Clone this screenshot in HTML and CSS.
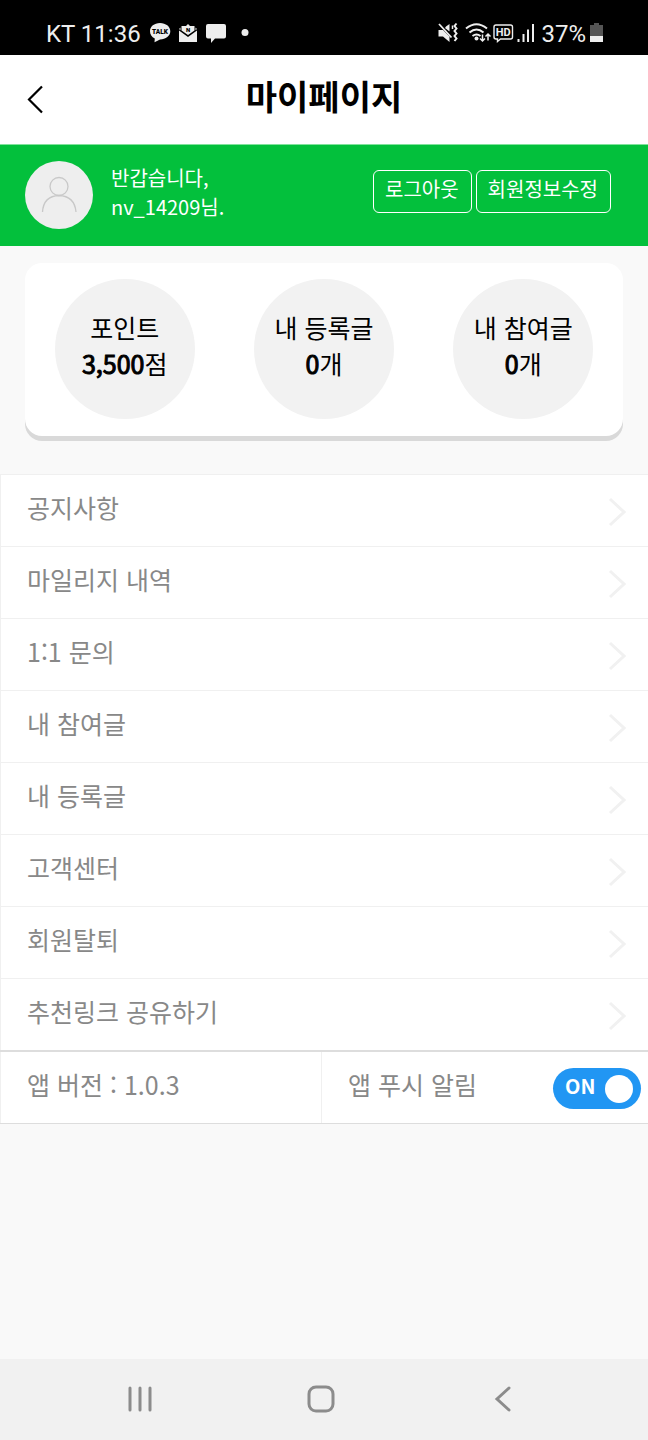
FILE: index.html
```html
<!DOCTYPE html>
<html lang="ko">
<head>
<meta charset="utf-8">
<meta name="viewport" content="width=device-width, initial-scale=1">
<title>마이페이지</title>
<link rel="stylesheet" href="styles.css">
</head>
<body>
<div class="status">
  <div class="status-side">
    <span class="status-text">KT 11:36</span>
    <svg class="status-notices" width="102" height="24" viewBox="0 0 102 24" aria-hidden="true">
      <path fill="#eee" d="M11 2c5.800 0 10.300 3.600 10.300 8.200s-4.500 8.200-10.300 8.200L5.500 21.200 5.800 17.500C2.700 15.900 1 13.300 1 10.200 1 5.600 5.200 2 11 2z"/>
      <text class="tiny" x="11" y="12.700" font-size="6.500" text-anchor="middle">TALK</text>
      <path fill="#eee" d="M30 9.500l9 6.500 9-6.500V21H30z"/>
      <path fill="#eee" d="M32.500 5H37l2-2 2 2h4.500v4.500L39 14l-6.500-4.500zM30 8l1.500-1.500v2.700zM48 8l-1.500-1.500v2.700z"/>
      <text class="tiny" x="39" y="10.500" font-size="6" text-anchor="middle">N</text>
      <path fill="#eee" d="M59 3h16q2 0 2 2v10.500q0 2-2 2h-9L62 22v-4.500h-3q-2 0-2-2V5q0-2 2-2z"/>
      <circle fill="#eee" cx="96" cy="11.500" r="3.500"/>
    </svg>
  </div>
  <div class="status-side">
    <svg class="status-signals" width="98" height="24" viewBox="0 0 98 24" aria-hidden="true">
      <path fill="#eee" d="M1.500 9H6l6.500 6.500V21L6 15.500H1.500zM9 5.500 12.500 3v7.500L8 7z"/>
      <path d="M2 3l12.500 13.500" stroke="#eee" stroke-width="1.800"/>
      <path d="M19.500 2.500l-2 2.500 2 2.500-2 2.500 2 2.500-2 2.500 2 2.500-2 2.500" fill="none" stroke="#eee" stroke-width="2"/>
      <path d="M15.500 4.500v3.500" stroke="#eee" stroke-width="1.500"/>
      <g fill="none" stroke="#eee" stroke-width="2"><path d="M29 7.500q10.500-8.500 21 0M32.500 11.500q7-6 14 0M35.500 15q4-3 8 0"/></g>
      <circle cx="39.500" cy="17.500" r="2" fill="#eee"/>
      <path d="M45.500 13.500v6M43 17.500l2.500 2.500 2.500-2.500M51 19.500v-6M48.500 15.500 51 13l2.500 2.500" fill="none" stroke="#eee" stroke-width="1.500"/>
      <path d="M59 4h14.500q2 0 2 2v10q0 2-2 2H63.500l-3 2.500V18H59q-2 0-2-2V6q0-2 2-2z" fill="none" stroke="#eee" stroke-width="1.400"/>
      <text class="hd" x="66.300" y="15" font-size="11" text-anchor="middle">HD</text>
      <path d="M81.500 18v3M86.500 13v8M91 8.500V21M96 3v18" stroke="#eee" stroke-width="2"/>
    </svg>
    <span class="status-text">37%</span>
    <svg class="battery" width="13" height="20" viewBox="0 0 13 20" aria-hidden="true">
      <path fill="#555" d="M4 0h5v2h4v12H0V2h4z"/><path fill="#eee" d="M0 13h13v6H0z"/>
    </svg>
  </div>
</div>

<header class="topbar">
  <button class="back" type="button" aria-label="뒤로">
    <svg width="20" height="30" viewBox="0 0 20 30"><path d="M16 1.500 3 14.500l13 13" fill="none" stroke="#000" stroke-width="2.200"/></svg>
  </button>
  <h1 class="title">마이페이지</h1>
</header>

<main>
  <section class="profile">
    <svg class="avatar" width="68" height="68" viewBox="0 0 68 68" role="img" aria-label="프로필">
      <circle cx="34" cy="34" r="34" fill="#eee"/>
      <g fill="none" stroke="#c8c8c8" stroke-width="1.300"><circle cx="34" cy="25.500" r="9"/><path d="M17.500 51q1-16 16.500-16.500Q49.500 35 51 51"/></g>
    </svg>
    <p class="greeting">반갑습니다,<br>nv_14209님.</p>
    <div class="actions">
      <button class="pill" type="button">로그아웃</button>
      <button class="pill" type="button">회원정보수정</button>
    </div>
  </section>

  <section class="stats">
    <div class="stat"><span>포인트</span><span><b>3,500</b>점</span></div>
    <div class="stat"><span>내 등록글</span><span><b>0</b>개</span></div>
    <div class="stat"><span>내 참여글</span><span><b>0</b>개</span></div>
  </section>

  <nav class="menu">
    <a class="row" href="#">공지사항<svg class="chev" viewBox="0 0 18 30"><path d="M2 2l14 13L2 28"/></svg></a>
    <a class="row" href="#">마일리지 내역<svg class="chev" viewBox="0 0 18 30"><path d="M2 2l14 13L2 28"/></svg></a>
    <a class="row" href="#">1:1 문의<svg class="chev" viewBox="0 0 18 30"><path d="M2 2l14 13L2 28"/></svg></a>
    <a class="row" href="#">내 참여글<svg class="chev" viewBox="0 0 18 30"><path d="M2 2l14 13L2 28"/></svg></a>
    <a class="row" href="#">내 등록글<svg class="chev" viewBox="0 0 18 30"><path d="M2 2l14 13L2 28"/></svg></a>
    <a class="row" href="#">고객센터<svg class="chev" viewBox="0 0 18 30"><path d="M2 2l14 13L2 28"/></svg></a>
    <a class="row" href="#">회원탈퇴<svg class="chev" viewBox="0 0 18 30"><path d="M2 2l14 13L2 28"/></svg></a>
    <a class="row" href="#">추천링크 공유하기<svg class="chev" viewBox="0 0 18 30"><path d="M2 2l14 13L2 28"/></svg></a>
  </nav>

  <section class="app">
    <div class="cell">앱 버전 : 1.0.3</div>
    <div class="cell push">
      <label for="push">앱 푸시 알림</label>
      <label class="switch" for="push">
        <input class="switch-input" id="push" type="checkbox" role="switch" checked>
        <span class="switch-text">ON</span>
        <span class="knob"></span>
      </label>
    </div>
  </section>
</main>

<footer class="sysnav">
  <button class="sys" type="button" aria-label="최근 앱"><svg width="28" height="28" viewBox="0 0 28 28"><path d="M4 3v22M14 3v22M24 3v22"/></svg></button>
  <button class="sys" type="button" aria-label="홈"><svg width="28" height="28" viewBox="0 0 28 28"><rect x="2" y="2" width="24" height="24" rx="7"/></svg></button>
  <button class="sys" type="button" aria-label="이전"><svg width="28" height="28" viewBox="0 0 28 28"><path d="M21 3 9 14l12 11"/></svg></button>
</footer>
</body>
</html>
```

FILE: styles.css
```css
* { box-sizing: border-box; }
body {
  margin: 0;
  min-height: 100vh;
  display: flex;
  flex-direction: column;
  background: #f9f9f9;
  color: #000;
  font-family: "Noto Sans CJK KR", sans-serif;
  font-size: 25px;
  line-height: 36px;
}
button { font: inherit; color: inherit; background: none; border: 0; padding: 0; cursor: pointer; }
svg { display: block; flex: none; }

.status {
  display: flex;
  justify-content: space-between;
  padding: 12px 45px 1px 46px;
  background: #000;
  color: #eee;
}
.status-side { display: flex; align-items: center; height: 42px; }
.status-text { padding-top: 1px; font-family: Roboto, sans-serif; font-size: 24px; }
.status-notices { margin-left: 8px; }
.status-signals { margin-right: 6px; }
.battery { margin-left: 4px; }
.tiny { font-family: Roboto, sans-serif; font-weight: 900; fill: #000; }
.hd { font-family: Roboto, sans-serif; font-weight: 700; fill: #eee; }

.topbar {
  display: grid;
  grid-template-columns: 72px 1fr 72px;
  align-items: center;
  height: 90px;
  background: #fff;
  border-bottom: 1px solid #80e29c;
}
.back { display: flex; padding: 0 26px; }
.title { margin: 0; padding-bottom: 8px; font-size: 34px; line-height: 48px; font-weight: 700; text-align: center; }

.profile {
  display: flex;
  align-items: center;
  gap: 18px;
  padding: 16px 37px 17px 25px;
  background: #03c03c;
  color: #fff;
  font-size: 20px;
  line-height: 29px;
}
.greeting { margin: 0; padding-bottom: 6px; }
.actions { display: flex; gap: 4px; margin-left: auto; padding-bottom: 8px; }
.pill { border: 1px solid #fff; border-radius: 6px; padding: 2px 12px 8px 11px; line-height: 31px; }

.stats {
  display: grid;
  grid-template-columns: repeat(3, 1fr);
  justify-items: center;
  margin: 17px 25px 38px;
  padding: 16px 0 17px;
  background: #fff;
  border-radius: 17px;
  box-shadow: 0 5px 0 #d9d9d9;
}
.stat {
  display: flex;
  flex-direction: column;
  align-items: center;
  justify-content: center;
  width: 140px;
  height: 140px;
  padding-bottom: 8px;
  border-radius: 50%;
  background: #f2f2f2;
}
.stat b { font-weight: 400; -webkit-text-stroke: 1px #000; }

.menu { border-left: 1px solid #f0f0f0; }
.row, .cell { display: flex; align-items: center; background: #fff; color: #888; text-decoration: none; }
.row {
  justify-content: space-between;
  height: 72px;
  padding: 0 22px 8px 26px;
  border-top: 1px solid #f0f0f0;
}
.chev { width: 18px; height: 30px; margin-top: 10px; fill: none; stroke: #f1f1f1; stroke-width: 3; }

.app { display: grid; grid-template-columns: 321px 1fr; border-top: 2px solid #ddd; border-bottom: 1px solid #ddd; }
.cell { height: 71px; padding: 0 7px 8px 26px; border-left: 1px solid #f0f0f0; }
.push { justify-content: space-between; }
.switch {
  display: flex;
  align-items: center;
  justify-content: space-between;
  width: 88px;
  height: 41px;
  margin-top: 10px;
  padding: 0 8px 0 12px;
  border-radius: 21px;
  background: #2196f3;
  color: #fff;
  cursor: pointer;
}
.switch-input { position: absolute; opacity: 0; margin: 0; }
.switch-text { padding-bottom: 6px; font-size: 20px; font-weight: 700; line-height: 28px; }
.knob { width: 28px; height: 28px; border-radius: 50%; background: #fff; }

.sysnav {
  display: flex;
  justify-content: center;
  gap: 153px;
  margin-top: auto;
  padding: 26px 6px 27px 0;
  background: #f1f1f1;
}
.sys svg { fill: none; stroke: #8c8c8c; stroke-width: 3; stroke-linecap: round; }
```
